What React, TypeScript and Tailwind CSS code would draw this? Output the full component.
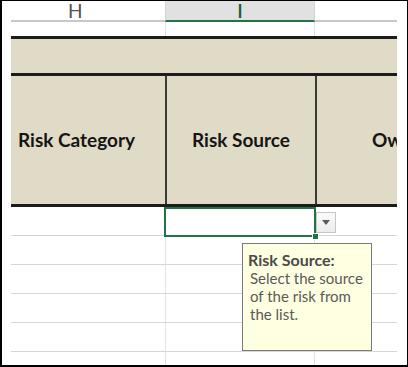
export default function App() {
  return (
    <div className="relative w-[408px] h-[367px] overflow-hidden bg-white border-l-2 border-t border-r border-b-2 border-black font-['Lato',sans-serif]">
      <div className="ml-[9px] mr-[10px]">
        {/* column letters */}
        <div className="flex h-[21px]">
          <div className="w-[154px] border-b-2 border-[#c8c8c8] pl-[57px] text-[19px] leading-[19px] text-[#505050]">H</div>
          <div className="w-[150px] bg-[#e1e1e1] border-l border-r border-[#d2d2d2] border-b-2 border-b-[#217346] text-center text-[19px] leading-[19px] font-semibold text-[#1d5c38]">
            I
          </div>
          <div className="flex-1 border-b-2 border-[#c8c8c8]" />
        </div>

        {/* empty row */}
        <div className="flex h-[14px]">
          <div className="w-[154px]" />
          <div className="w-[150px] border-l border-r border-[#e2e2e2]" />
          <div className="flex-1" />
        </div>

        <div className="h-[3px] bg-[#1c1c1c]" />
        <div className="h-[34px] bg-[#e0dbc7]" />
        <div className="h-[3px] bg-[#1c1c1c]" />

        {/* header cells */}
        <div className="flex h-[128px] bg-[#e0dbc7] text-[19px] font-bold text-[#151515]">
          <div className="w-[154px] flex items-center pl-[7px]">Risk Category</div>
          <div className="w-[150px] border-l-2 border-[#3a3a3a] flex items-center justify-center">Risk Source</div>
          <div className="flex-1 border-l-2 border-[#3a3a3a] flex items-center pl-[55px] overflow-hidden whitespace-nowrap">Owner</div>
        </div>

        <div className="h-[3px] bg-[#1c1c1c]" />

        {/* data rows */}
        {[0, 1, 2, 3, 4, 5].map(i => (
          <div key={i} className="flex h-[29px] border-b border-[#d6d6d6]">
            <div className="w-[154px]" />
            <div className="w-[150px] border-l border-r border-[#e2e2e2]" />
            <div className="flex-1" />
          </div>
        ))}
      </div>

      {/* selection */}
      <div className="absolute left-[162px] top-[206px] w-[152px] h-[30px] border-2 border-[#217346]" />
      <div className="absolute left-[310px] top-[232px] w-[7px] h-[7px] bg-[#217346] border border-white" />

      {/* dropdown arrow */}
      <div className="absolute left-[314px] top-[211px] w-[20px] h-[21px] border border-[#c6c6c6] bg-gradient-to-b from-[#fafafa] to-[#ececec] flex items-center justify-center">
        <svg width="8" height="5" viewBox="0 0 8 5">
          <path d="M0 0 H8 L4 5 Z" fill="#5a5a5a" />
        </svg>
      </div>

      {/* input message */}
      <div className="absolute left-[240px] top-[242px] w-[130px] h-[108px] border border-[#7a7a7a] bg-[#ffffe1] pt-[7px] pl-[5px] leading-[18px]">
        <p className="text-[16px] font-bold text-[#4a4a4a]">Risk Source:</p>
        <p className="pl-[2px] text-[15px] text-[#5a5a5a]">
          Select the source
          <br />
          of the risk from
          <br />
          the list.
        </p>
      </div>
    </div>
  )
}
